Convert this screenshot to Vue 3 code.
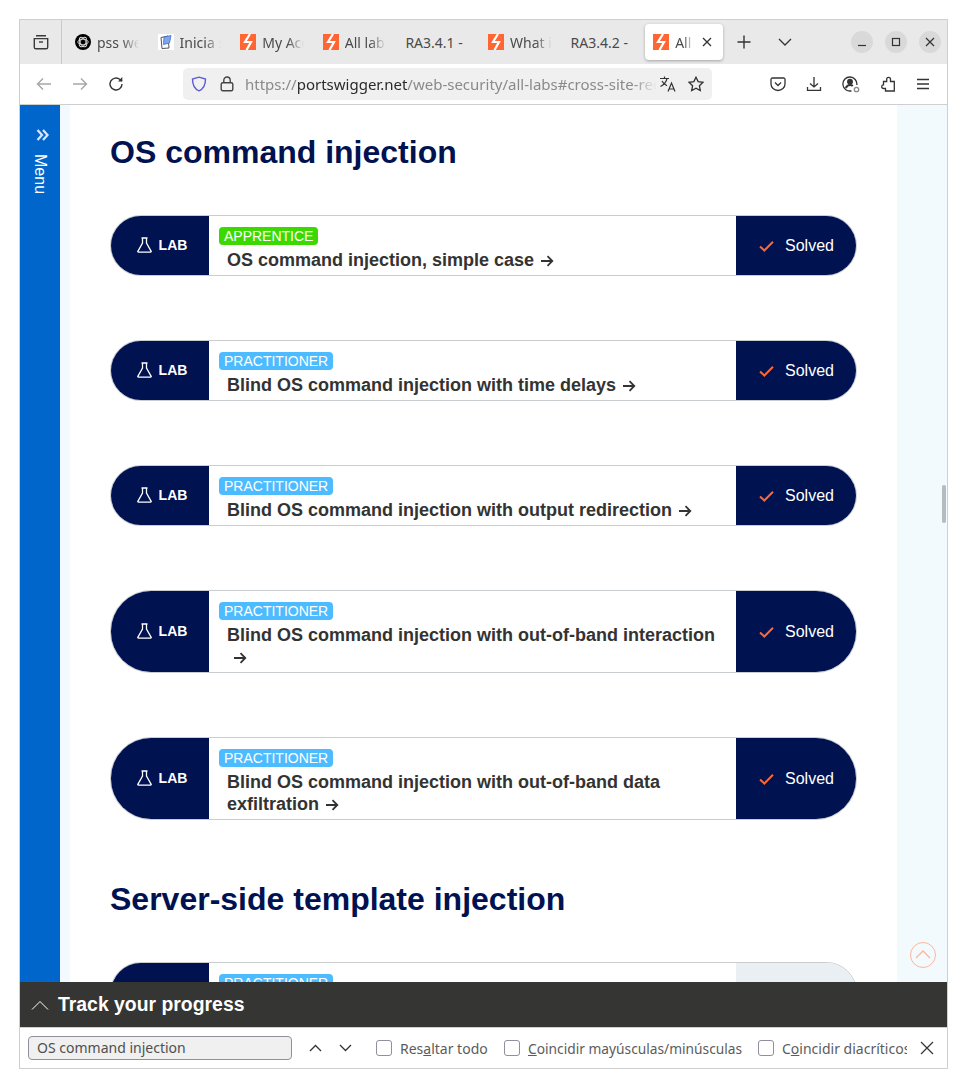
<template>
  <div class="window">
    <!-- tab strip -->
    <div class="tabbar">
      <div class="view-btn">
        <svg width="18" height="18" viewBox="0 0 18 18" fill="none" stroke="#3b3b3b" stroke-width="1.4">
          <path d="M4 2.800h10M2.300 5.600h13.400v8.600a1.600 1.600 0 0 1-1.600 1.600H3.900a1.600 1.600 0 0 1-1.600-1.600z" />
          <path d="M7 9h4" />
        </svg>
      </div>
      <div class="tabs">
        <div class="tab" v-for="tab in tabs" :key="tab.id" :class="{ active: tab.active }">
          <svg v-if="tab.icon === 'ps'" class="fav" viewBox="0 0 16 16">
            <rect width="16" height="16" fill="#ff6633" />
            <path d="M10 0 5 8h6L6.500 16" fill="none" stroke="#fff" stroke-width="2.200" />
          </svg>
          <svg v-else-if="tab.icon === 'gpt'" class="fav" viewBox="0 0 16 16">
            <circle cx="8" cy="8" r="8" fill="#000" />
            <g fill="none" stroke="#ddd" stroke-width=".9">
              <ellipse cx="8" cy="8" rx="5.200" ry="2.800" />
              <ellipse cx="8" cy="8" rx="5.200" ry="2.800" transform="rotate(60 8 8)" />
              <ellipse cx="8" cy="8" rx="5.200" ry="2.800" transform="rotate(120 8 8)" />
            </g>
          </svg>
          <svg v-else-if="tab.icon === 'note'" class="fav" viewBox="0 0 16 16">
            <rect width="16" height="16" fill="#fff" />
            <path d="M3 3.500 10 2l1 12-7 .5z" fill="#fff" stroke="#555" stroke-width="1" />
            <path d="M6 3 13 1.500 11.500 9 5.500 10.500z" fill="#7fa6ea" stroke="#3f6fd0" stroke-width=".8" />
          </svg>
          <span class="tab-title" :class="{ plain: !tab.icon }">{{ tab.title }}</span>
          <svg v-if="tab.active" class="tab-close" width="10" height="10" viewBox="0 0 10 10" stroke="#333" stroke-width="1.300">
            <path d="M1 1l8 8M9 1l-8 8" />
          </svg>
        </div>
      </div>
      <svg class="plus" width="14" height="14" viewBox="0 0 14 14" stroke="#333" stroke-width="1.400">
        <path d="M7 .5v13M.5 7h13" />
      </svg>
      <svg class="tabs-more" width="14" height="8" viewBox="0 0 14 8" fill="none" stroke="#333" stroke-width="1.300">
        <path d="M1 1l6 6 6-6" />
      </svg>
      <div class="win-btns">
        <div class="win-btn">
          <svg width="10" height="10" viewBox="0 0 10 10" stroke="#333" stroke-width="1.200"><path d="M1 8.500h8" /></svg>
        </div>
        <div class="win-btn">
          <svg width="10" height="10" viewBox="0 0 10 10" fill="none" stroke="#333" stroke-width="1.200"><rect x="1.500" y="1.500" width="7" height="7" /></svg>
        </div>
        <div class="win-btn">
          <svg width="10" height="10" viewBox="0 0 10 10" stroke="#333" stroke-width="1.200"><path d="M1 1l8 8M9 1l-8 8" /></svg>
        </div>
      </div>
    </div>

    <!-- nav bar -->
    <div class="navbar">
      <svg class="nav-ico" width="16" height="16" viewBox="0 0 16 16" fill="none" stroke="#a6a6a6" stroke-width="1.400">
        <path d="M15 8H1.500M7 2.500 1.500 8 7 13.500" />
      </svg>
      <svg class="nav-ico" width="16" height="16" viewBox="0 0 16 16" fill="none" stroke="#a6a6a6" stroke-width="1.400">
        <path d="M1 8h13.500M9 2.500 14.500 8 9 13.500" />
      </svg>
      <svg class="nav-ico" width="16" height="16" viewBox="0 0 16 16" fill="none" stroke="#333" stroke-width="1.400">
        <path d="M14 8a6 6 0 1 1-2-4.500L14 5" />
        <path d="M14.300 1v4.400H10" fill="#333" stroke="none" />
      </svg>
      <div class="urlbar">
        <svg class="shield" width="16" height="16" viewBox="0 0 16 16" fill="none" stroke="#5b5bd6" stroke-width="1.400">
          <path d="M8 1.200 14.500 3c0 6-2 10-6.500 11.800C3.500 13 1.500 9 1.500 3z" />
        </svg>
        <svg class="lock" width="14" height="16" viewBox="0 0 14 16" fill="none" stroke="#444" stroke-width="1.400">
          <rect x="1.200" y="6.700" width="11.600" height="8" rx="1.500" />
          <path d="M3.800 6.700V4.200a3.200 3.200 0 0 1 6.400 0v2.500" />
        </svg>
        <div class="url"><span class="dim">https://</span>portswigger.net<span class="dim">/web-security/all-labs#cross-site-request-forgery</span></div>
        <svg class="translate" width="18" height="18" viewBox="0 0 18 18" fill="none" stroke="#333" stroke-width="1.200">
          <path d="M1 3.500h9M5.500 1.500v2M8 3.500C7.200 7 4.500 10 1.500 11.500M3 6c1 2 3 3.800 5 4.800" />
          <path d="M9 16.500l3.500-8.500L16 16.500M10.200 14h4.600" />
        </svg>
        <svg class="star" width="16" height="16" viewBox="0 0 16 16" fill="none" stroke="#333" stroke-width="1.300">
          <path d="M8 1.200 10.100 5.600 15 6.300 11.400 9.700 12.300 14.500 8 12.200 3.700 14.500 4.600 9.700 1 6.300 5.900 5.600z" />
        </svg>
      </div>
      <div class="nav-right">
        <svg width="16" height="16" viewBox="0 0 16 16" fill="none" stroke="#333" stroke-width="1.300">
          <path d="M2.300 2h11.400a1.300 1.300 0 0 1 1.300 1.300V8a7 6.500 0 0 1-14 0V3.300A1.300 1.300 0 0 1 2.300 2z" />
          <path d="M5 6.500 8 9.500l3-3" />
        </svg>
        <svg width="16" height="16" viewBox="0 0 16 16" fill="none" stroke="#333" stroke-width="1.300">
          <path d="M8 1v10M4 7.500 8 11l4-3.500M1.500 11v3.300h13V11" />
        </svg>
        <svg width="18" height="18" viewBox="0 0 18 18" fill="none" stroke="#333" stroke-width="1.300">
          <path d="M14.800 10A7 7 0 1 0 9.500 15.800" />
          <circle cx="8" cy="6.800" r="2.300" fill="#333" />
          <path d="M3.800 13c1-2.200 2.500-3 4.200-3 1 0 2 .3 2.800 1" stroke-width="2" />
          <circle cx="14.500" cy="14.500" r="2.200" stroke="#888" />
        </svg>
        <svg width="16" height="16" viewBox="0 0 16 16" fill="none" stroke="#333" stroke-width="1.300">
          <path d="M5.500 15V12.500H3.500a1.800 1.800 0 0 1 0-3.600h0V5.500h3.200V3.300a1.900 1.900 0 0 1 3.800 0v2.200h3.800V15z" />
        </svg>
        <svg width="14" height="14" viewBox="0 0 14 14" stroke="#333" stroke-width="1.300">
          <path d="M1 2.500h12M1 7h12M1 11.500h12" />
        </svg>
      </div>
    </div>

    <!-- page -->
    <div class="viewport">
      <aside class="sidemenu">
        <svg class="menu-chevrons" width="13" height="12" viewBox="0 0 13 12" fill="none" stroke="#d5e6fa" stroke-width="2.300">
          <path d="M1.500 1 6 6l-4.500 5M7 1l4.500 5L7 11" />
        </svg>
        <span class="menu-label">Menu</span>
      </aside>
      <div class="strip"></div>
      <main class="content">
        <section v-for="group in groups" :key="group.title" class="group">
          <h2>{{ group.title }}</h2>
          <div v-for="lab in group.labs" :key="lab.title" class="lab-row">
            <div class="lab-side">
              <svg width="15" height="16" viewBox="0 0 15 16" fill="none" stroke="#fff" stroke-width="1.300">
                <path d="M4.500 1h6M5.500 1v5L1 14a.7.7 0 0 0 .6 1.200h11.800A.7.7 0 0 0 14 14L9.500 6V1" />
              </svg>
              <span>LAB</span>
            </div>
            <div class="lab-body">
              <span class="level" :class="lab.level">{{ lab.level.toUpperCase() }}</span>
              <a class="lab-title">{{ lab.title }}<svg class="arrow" width="14" height="12" viewBox="0 0 14 12" fill="none" stroke="#333332" stroke-width="1.800"><path d="M1 6h11M7.500 1.200 12.300 6l-4.800 4.800" /></svg></a>
            </div>
            <div class="lab-status" :class="{ unsolved: !lab.solved }">
              <template v-if="lab.solved">
                <svg width="15" height="12" viewBox="0 0 15 12" fill="none" stroke="#ff6633" stroke-width="2">
                  <path d="M1 6.500 5.300 10.500 14 1.800" />
                </svg>
                <span>Solved</span>
              </template>
            </div>
          </div>
        </section>
      </main>
      <div class="right-strip"></div>
      <div class="scroll-thumb"></div>
      <div class="to-top">
        <svg width="16" height="10" viewBox="0 0 16 10" fill="none" stroke="#ffb59c" stroke-width="1.300">
          <path d="M1 9 8 2l7 7" />
        </svg>
      </div>
    </div>

    <div class="track">
      <svg width="18" height="10" viewBox="0 0 18 10" fill="none" stroke="#fff" stroke-width="1">
        <path d="M1 9.500 9 1.500l8 8" />
      </svg>
      <span>Track your progress</span>
    </div>

    <!-- find bar -->
    <div class="findbar">
      <div class="find-input">OS command injection</div>
      <svg class="find-up" width="13" height="8" viewBox="0 0 13 8" fill="none" stroke="#333" stroke-width="1.300"><path d="M1 7l5.500-5.500L12 7" /></svg>
      <svg class="find-down" width="13" height="8" viewBox="0 0 13 8" fill="none" stroke="#333" stroke-width="1.300"><path d="M1 1l5.500 5.500L12 1" /></svg>
      <label class="opt opt1"><i class="box"></i><span>Res<u>a</u>ltar todo</span></label>
      <label class="opt opt2"><i class="box"></i><span><u>C</u>oincidir mayúsculas/minúsculas</span></label>
      <label class="opt opt3"><i class="box"></i><span class="clip">C<u>o</u>incidir diacríticos</span></label>
      <svg class="find-close" width="14" height="14" viewBox="0 0 14 14" stroke="#333" stroke-width="1.200"><path d="M1 1l12 12M13 1 1 13" /></svg>
    </div>
  </div>
</template>

<script setup>
const tabs = [
  { id: 1, title: 'pss web', icon: 'gpt' },
  { id: 2, title: 'Inicia sesión', icon: 'note' },
  { id: 3, title: 'My Account', icon: 'ps' },
  { id: 4, title: 'All labs', icon: 'ps' },
  { id: 5, title: 'RA3.4.1 -', icon: '' },
  { id: 6, title: 'What is', icon: 'ps' },
  { id: 7, title: 'RA3.4.2 -', icon: '' },
  { id: 8, title: 'All labs', icon: 'ps', active: true }
]

const groups = [
  {
    title: 'OS command injection',
    labs: [
      { title: 'OS command injection, simple case', level: 'apprentice', solved: true },
      { title: 'Blind OS command injection with time delays', level: 'practitioner', solved: true },
      { title: 'Blind OS command injection with output redirection', level: 'practitioner', solved: true },
      { title: 'Blind OS command injection with out-of-band interaction', level: 'practitioner', solved: true },
      { title: 'Blind OS command injection with out-of-band data exfiltration', level: 'practitioner', solved: true }
    ]
  },
  {
    title: 'Server-side template injection',
    labs: [
      { title: 'Basic server-side template injection', level: 'practitioner', solved: false }
    ]
  }
]
</script>

<style>
body {
  background: #fff;
}
</style>

<style scoped>
.window {
  box-sizing: border-box;
  width: 929px;
  height: 1050px;
  margin: 19px 0 0 19px;
  border: 1px solid #cfcfcf;
  display: flex;
  flex-direction: column;
  font-family: "Noto Sans", sans-serif;
  overflow: hidden;
}

.tabbar {
  height: 44px;
  flex: none;
  display: flex;
  align-items: center;
  background: #e9e9e9;
}

.view-btn {
  width: 42px;
  height: 44px;
  flex: none;
  box-sizing: border-box;
  border-right: 1px solid #c9c9c9;
  display: flex;
  align-items: center;
  justify-content: center;
}

.tabs {
  display: flex;
  align-items: center;
  padding-left: 1px;
}

.tab {
  width: 82.600px;
  height: 36px;
  box-sizing: border-box;
  padding: 0 7px 0 12px;
  display: flex;
  align-items: center;
  gap: 6px;
  font-size: 14px;
  color: #4a4a4a;
  border-radius: 4px;
}

.tab.active {
  width: 78px;
  margin-left: 4px;
  padding: 0 11px 0 8px;
  background: #fff;
  box-shadow: 0 1px 3px rgba(0, 0, 0, 0.3);
}

.fav {
  width: 16px;
  height: 16px;
  flex: none;
}

.tab-title {
  flex: 1;
  min-width: 0;
  white-space: nowrap;
  overflow: hidden;
  -webkit-mask-image: linear-gradient(to right, #000 60%, transparent 100%);
  mask-image: linear-gradient(to right, #000 60%, transparent 100%);
}

.tab-title.plain {
  -webkit-mask-image: none;
  mask-image: none;
}

.tab.active .tab-title {
  -webkit-mask-image: linear-gradient(to right, #000 40%, transparent 90%);
  mask-image: linear-gradient(to right, #000 40%, transparent 90%);
}

.tab-close {
  flex: none;
}

.plus {
  margin-left: 14px;
  flex: none;
}

.tabs-more {
  margin-left: 27px;
  flex: none;
}

.win-btns {
  margin-left: auto;
  margin-right: 6px;
  display: flex;
  gap: 12px;
}

.win-btn {
  width: 22px;
  height: 22px;
  border-radius: 50%;
  background: #d9d9d9;
  display: flex;
  align-items: center;
  justify-content: center;
}

.navbar {
  height: 41px;
  flex: none;
  box-sizing: border-box;
  border-bottom: 1px solid #cfcfcf;
  background: #fff;
  display: flex;
  align-items: center;
  padding-left: 16px;
  gap: 20px;
}

.nav-ico {
  flex: none;
}

.urlbar {
  width: 529px;
  height: 32px;
  margin-left: 39px;
  margin-top: -1px;
  box-sizing: border-box;
  flex: none;
  background: #f0f0f0;
  border-radius: 5px;
  padding-left: 8px;
  display: flex;
  align-items: center;
}

.shield {
  flex: none;
}

.lock {
  flex: none;
  margin-left: 13px;
}

.url {
  margin-left: 11px;
  width: 412px;
  flex: none;
  overflow: hidden;
  white-space: nowrap;
  font-size: 15px;
  color: #2a2a2a;
  -webkit-mask-image: linear-gradient(to right, #000 94%, transparent 100%);
  mask-image: linear-gradient(to right, #000 94%, transparent 100%);
}

.dim {
  color: #8a8a8a;
}

.translate {
  flex: none;
  margin-left: 2px;
}

.star {
  flex: none;
  margin-left: 11px;
}

.nav-right {
  display: flex;
  align-items: center;
  gap: 20px;
  margin-left: 38px;
}

.viewport {
  position: relative;
  flex: 1;
  min-height: 0;
  display: flex;
  overflow: hidden;
  background: #fff;
}

.sidemenu {
  width: 40px;
  flex: none;
  background: #0066cc;
  display: flex;
  flex-direction: column;
  align-items: center;
  padding-top: 24px;
  gap: 13px;
  font-family: "Liberation Sans", Arial, sans-serif;
}

.menu-chevrons {
  margin-left: 4px;
}

.menu-label {
  writing-mode: vertical-rl;
  font-size: 16px;
  color: #fff;
}

.strip {
  width: 10px;
  flex: none;
  background: #f3fafd;
}

.content {
  flex: 1;
  min-width: 0;
  padding: 27px 40px 0;
  font-family: "Liberation Sans", Arial, sans-serif;
}

.group {
  margin-bottom: 59px;
}

h2 {
  margin: 0 0 43px;
  font-size: 32px;
  line-height: 40px;
  font-weight: 700;
  color: #00124f;
}

.lab-row {
  display: flex;
  box-sizing: border-box;
  min-height: 61px;
  margin-bottom: 64px;
  border: 1px solid #c9cdd0;
  border-radius: 41px;
  overflow: hidden;
}

.group .lab-row:last-child {
  margin-bottom: 0;
}

.lab-side {
  width: 98px;
  flex: none;
  background: #00124f;
  display: flex;
  align-items: center;
  justify-content: center;
  gap: 7px;
  padding: 0 0 2px 4px;
  box-sizing: border-box;
  color: #fff;
  font-size: 14px;
  font-weight: 700;
}

.lab-body {
  flex: 1;
  min-width: 0;
  padding: 11px 18px 4px 10px;
  background: #fff;
}

.level {
  display: block;
  width: fit-content;
  height: 18px;
  line-height: 18px;
  padding: 0 5px;
  border-radius: 4px;
  font-size: 14px;
  color: #fff;
}

.level.apprentice {
  background: #3cd900;
}

.level.practitioner {
  background: #4dbbff;
}

.lab-title {
  display: block;
  margin: 4px 0 0 8px;
  font-size: 18px;
  line-height: 22px;
  font-weight: 700;
  color: #333332;
}

.arrow {
  display: inline-block;
  vertical-align: -1px;
  margin-left: 6px;
}

.lab-status {
  width: 120px;
  flex: none;
  background: #00124f;
  display: flex;
  align-items: center;
  gap: 11px;
  padding-left: 23px;
  box-sizing: border-box;
  color: #fff;
  font-size: 16px;
}

.lab-status.unsolved {
  background: #e9eff2;
}

.right-strip {
  width: 50px;
  flex: none;
  background: #f3fafd;
}

.scroll-thumb {
  position: absolute;
  right: 1px;
  top: 380px;
  width: 4px;
  height: 38px;
  border-radius: 2px;
  background: #b5bcc0;
}

.to-top {
  position: absolute;
  left: 890px;
  top: 837px;
  width: 24px;
  height: 21px;
  padding-bottom: 3px;
  border: 1px solid #ffb59c;
  border-radius: 50%;
  display: flex;
  align-items: center;
  justify-content: center;
}

.track {
  height: 45px;
  flex: none;
  background: #353533;
  display: flex;
  align-items: center;
  gap: 9px;
  padding-left: 11px;
  font-family: "Liberation Sans", Arial, sans-serif;
  font-size: 19.400px;
  font-weight: 700;
  color: #fff;
}

.findbar {
  height: 41px;
  flex: none;
  box-sizing: border-box;
  border-top: 1px solid #cfcfcf;
  background: #fff;
  display: flex;
  align-items: center;
  padding-left: 8px;
  font-size: 14px;
  color: #5c5c5c;
}

.find-input {
  width: 264px;
  height: 24px;
  box-sizing: border-box;
  flex: none;
  border: 1px solid #8f8f9d;
  border-radius: 4px;
  background: #f0f0f0;
  line-height: 22px;
  padding-left: 8px;
  color: #4f4f4f;
}

.find-up {
  margin-left: 17px;
  flex: none;
}

.find-down {
  margin-left: 17px;
  flex: none;
}

.opt {
  display: flex;
  align-items: center;
  gap: 8px;
  flex: none;
  white-space: nowrap;
}

.opt1 {
  margin-left: 24px;
  width: 128px;
}

.opt2 {
  width: 254px;
  font-size: 13.750px;
}

.opt3 {
  width: 150px;
}

.box {
  display: block;
  width: 16px;
  height: 16px;
  box-sizing: border-box;
  flex: none;
  border: 1px solid #8f8f9d;
  border-radius: 3px;
  background: #fff;
}

.clip {
  width: 125px;
  overflow: hidden;
}

.find-close {
  flex: none;
  margin-left: 12px;
}
</style>
